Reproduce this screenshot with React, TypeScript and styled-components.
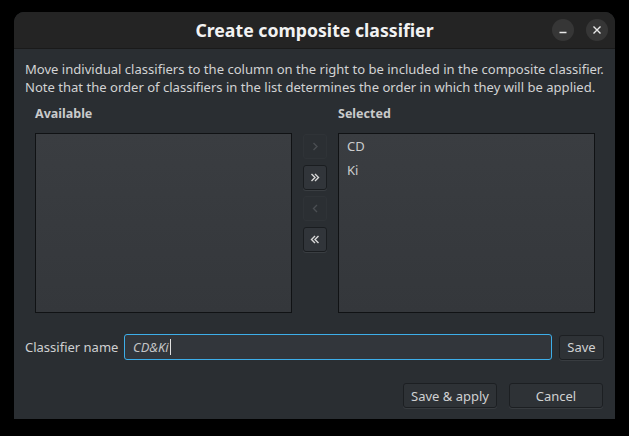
import React from "react";
import styled, { createGlobalStyle, css } from "styled-components";

const Global = createGlobalStyle`
  html, body { margin: 0; padding: 0; background: #000; }
  body { font-family: "Noto Sans", "DejaVu Sans", sans-serif; }
  * { box-sizing: border-box; }
`;

const Screen = styled.div`
  width: 629px;
  height: 436px;
  padding: 12px 14px 0 14px;
  background: #000;
`;

const Window = styled.div`
  width: 601px;
  height: 407px;
  border-radius: 10px 10px 0 0;
  overflow: hidden;
  display: flex;
  flex-direction: column;
  background: #2a2e32;
`;

const TitleBar = styled.div`
  height: 37px;
  flex: none;
  background: #242424;
  border-bottom: 1px solid #1a1a1a;
  display: grid;
  grid-template-columns: 1fr auto 1fr;
  align-items: center;
  padding: 0 7px 0 7px;
`;

const Title = styled.div`
  grid-column: 2;
  font-size: 17.7px;
  font-weight: 700;
  color: #f2f2f2;
`;

const WinButtons = styled.div`
  grid-column: 3;
  justify-self: end;
  display: flex;
  gap: 12px;
`;

const WinButton = styled.div`
  width: 22px;
  height: 22px;
  border-radius: 50%;
  background: #363636;
  display: flex;
  align-items: center;
  justify-content: center;
`;

const Body = styled.div`
  flex: 1;
  padding: 12px 11px 11px 11px;
  display: flex;
  flex-direction: column;
`;

const Description = styled.p`
  margin: 0;
  font-size: 13.05px;
  line-height: 17.5px;
  color: #d2d3d4;
`;

const Columns = styled.div`
  margin-top: 9px;
  padding: 0 9px 0 10px;
  display: grid;
  grid-template-columns: 257px 24px 257px;
  column-gap: 11px;
  grid-template-rows: 18px 180px;
  row-gap: 10px;
`;

const ColLabel = styled.div<{ $col: number }>`
  grid-column: ${(p) => p.$col};
  font-size: 12.5px;
  font-weight: 700;
  line-height: 18px;
  color: #c9cacb;
`;

const ListBox = styled.div`
  border: 1px solid #101214;
  background: linear-gradient(#3a3d41, #34373b);
  display: flex;
  flex-direction: column;
`;

const ListItem = styled.div`
  height: 24px;
  line-height: 24px;
  padding-left: 8px;
  font-size: 13px;
  color: #cbcccd;
`;

const ArrowColumn = styled.div`
  display: flex;
  flex-direction: column;
  gap: 6px;
  padding-top: 1px;
`;

const ArrowButton = styled.div<{ $disabled?: boolean }>`
  width: 24px;
  height: 25px;
  border-radius: 3px;
  display: flex;
  align-items: center;
  justify-content: center;
  ${(p) =>
    p.$disabled
      ? css`
          border: 1px solid #2f3337;
          background: #2b2f33;
          color: #4a4e52;
        `
      : css`
          border: 1px solid #1a1d20;
          background: #31353a;
          color: #d8d8d8;
          box-shadow: 0 1px 0 #3a3e42;
        `}
`;

const NameRow = styled.div`
  margin-top: 21px;
  display: flex;
  align-items: center;
  height: 26px;
`;

const NameLabel = styled.div`
  font-size: 13px;
  color: #cfd0d1;
  width: 99px;
  flex: none;
`;

const NameInput = styled.div`
  width: 429px;
  height: 26px;
  border: 1px solid #3daee9;
  border-radius: 3px;
  background: #32363b;
  display: flex;
  align-items: center;
  padding-left: 8px;
  font-size: 13px;
  font-style: italic;
  color: #c4c5c6;
`;

const Caret = styled.span`
  display: inline-block;
  width: 1px;
  height: 16px;
  background: #e0e0e0;
  margin-left: 1px;
`;

const PushButton = styled.div<{ $w: number }>`
  width: ${(p) => p.$w}px;
  height: 25px;
  border: 1px solid #1c1f22;
  border-radius: 3px;
  background: #2e3236;
  box-shadow: 0 1px 0 #383c40;
  display: flex;
  align-items: center;
  justify-content: center;
  font-size: 13px;
  color: #d0d1d2;
  flex: none;
`;

const SaveWrap = styled.div`
  margin-left: 7px;
`;

const Footer = styled.div`
  margin-top: 23px;
  display: flex;
  justify-content: flex-end;
  gap: 12px;
  padding-right: 1px;
`;

const Chevron = ({ dir, double }: { dir: "l" | "r"; double?: boolean }) => {
  const one = (x: number) =>
    dir === "r"
      ? `M${x} 2 L${x + 3.5} 5.5 L${x} 9`
      : `M${x + 3.5} 2 L${x} 5.5 L${x + 3.5} 9`;
  return (
    <svg width="12" height="11" viewBox="0 0 12 11">
      <path
        d={double ? `${one(2.5)} ${one(6)}` : one(4.5)}
        fill="none"
        stroke="currentColor"
        strokeWidth="1.4"
      />
    </svg>
  );
};

export default function App() {
  return (
    <>
      <Global />
      <Screen>
        <Window>
          <TitleBar>
            <Title>Create composite classifier</Title>
            <WinButtons>
              <WinButton>
                <svg width="10" height="10" viewBox="0 0 10 10">
                  <path d="M1.5 7.5 H8.5" stroke="#e8e8e8" strokeWidth="1.4" />
                </svg>
              </WinButton>
              <WinButton>
                <svg width="10" height="10" viewBox="0 0 10 10">
                  <path d="M1.5 1.5 L8.5 8.5 M8.5 1.5 L1.5 8.5" stroke="#e8e8e8" strokeWidth="1.4" />
                </svg>
              </WinButton>
            </WinButtons>
          </TitleBar>
          <Body>
            <Description>
              Move individual classifiers to the column on the right to be included in the composite classifier.
              <br />
              Note that the order of classifiers in the list determines the order in which they will be applied.
            </Description>
            <Columns>
              <ColLabel $col={1}>Available</ColLabel>
              <ColLabel $col={3}>Selected</ColLabel>
              <ListBox />
              <ArrowColumn>
                <ArrowButton $disabled>
                  <Chevron dir="r" />
                </ArrowButton>
                <ArrowButton>
                  <Chevron dir="r" double />
                </ArrowButton>
                <ArrowButton $disabled>
                  <Chevron dir="l" />
                </ArrowButton>
                <ArrowButton>
                  <Chevron dir="l" double />
                </ArrowButton>
              </ArrowColumn>
              <ListBox>
                <ListItem>CD</ListItem>
                <ListItem>Ki</ListItem>
              </ListBox>
            </Columns>
            <NameRow>
              <NameLabel>Classifier name</NameLabel>
              <NameInput>
                CD&amp;Ki
                <Caret />
              </NameInput>
              <SaveWrap>
                <PushButton $w={45}>Save</PushButton>
              </SaveWrap>
            </NameRow>
            <Footer>
              <PushButton $w={94}>Save &amp; apply</PushButton>
              <PushButton $w={94}>Cancel</PushButton>
            </Footer>
          </Body>
        </Window>
      </Screen>
    </>
  );
}
